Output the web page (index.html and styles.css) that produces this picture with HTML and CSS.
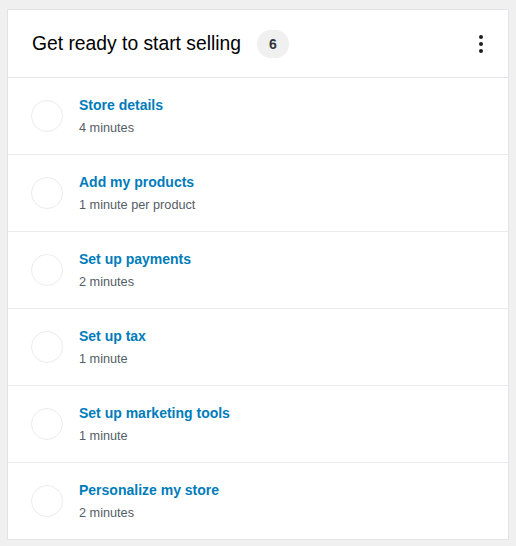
FILE: index.html
```html
<!DOCTYPE html>
<html lang="en">

<head>
    <meta charset="UTF-8">
    <title>Get ready to start selling</title>
    <link rel="stylesheet" href="styles.css">
</head>

<body>
    <!-- Task list card -->
    <div class="card">
        <div class="card-header">
            <h2>Get ready to start selling</h2>
            <span class="badge">6</span>
            <button class="menu" aria-label="More">
                <svg width="24" height="24" viewBox="0 0 24 24">
                    <circle cx="12" cy="5" r="2" />
                    <circle cx="12" cy="12" r="2" />
                    <circle cx="12" cy="19" r="2" />
                </svg>
            </button>
        </div>

        <ul class="tasks">
            <li class="task">
                <span class="check"></span>
                <div>
                    <a href="#">Store details</a>
                    <p>4 minutes</p>
                </div>
            </li>
            <li class="task">
                <span class="check"></span>
                <div>
                    <a href="#">Add my products</a>
                    <p>1 minute per product</p>
                </div>
            </li>
            <li class="task">
                <span class="check"></span>
                <div>
                    <a href="#">Set up payments</a>
                    <p>2 minutes</p>
                </div>
            </li>
            <li class="task">
                <span class="check"></span>
                <div>
                    <a href="#">Set up tax</a>
                    <p>1 minute</p>
                </div>
            </li>
            <li class="task">
                <span class="check"></span>
                <div>
                    <a href="#">Set up marketing tools</a>
                    <p>1 minute</p>
                </div>
            </li>
            <li class="task">
                <span class="check"></span>
                <div>
                    <a href="#">Personalize my store</a>
                    <p>2 minutes</p>
                </div>
            </li>
        </ul>
    </div>
</body>

</html>
```

FILE: styles.css
```css
body {
    font-family: 'Liberation Sans', Arial, sans-serif;
    margin: 0;
    padding: 9px 7px;
    background-color: #f0f0f0;
    color: #1e1e1e;
}

/* Card */
.card {
    background: #fff;
    border: 1px solid #e2e4e7;
    box-sizing: border-box;
    height: 531px;
}

.card-header {
    display: flex;
    align-items: center;
    height: 67px;
    padding: 0 15px 0 24px;
    border-bottom: 1px solid #e2e4e7;
}

.card-header h2 {
    margin: 0;
    font-size: 19.3px;
    font-weight: 400;
    color: #000;
}

.badge {
    margin-left: 16px;
    width: 32px;
    height: 28px;
    line-height: 28px;
    border-radius: 14px;
    background: #f0f0f0;
    text-align: center;
    font-size: 14px;
    font-weight: bold;
    color: #32373c;
}

.menu {
    margin-left: auto;
    background: none;
    border: 0;
    padding: 0;
    width: 24px;
    height: 24px;
    fill: #1e1e1e;
}

.menu svg {
    display: block;
}

/* Tasks */
.tasks {
    list-style: none;
    margin: 0;
    padding: 0;
}

.task {
    display: flex;
    align-items: center;
    height: 76px;
    padding: 0 23px;
    border-bottom: 1px solid #e8eaeb;
}

.task:last-child {
    border-bottom: 0;
}

.check {
    flex: none;
    width: 30px;
    height: 30px;
    border: 1px solid #ececec;
    border-radius: 50%;
    margin-right: 16px;
}

.task a {
    display: block;
    color: #007cba;
    font-size: 14px;
    font-weight: bold;
    text-decoration: none;
    line-height: 18px;
}

.task p {
    margin: 6px 0 0;
    font-size: 12.7px;
    color: #555d66;
    line-height: 16px;
}
```
